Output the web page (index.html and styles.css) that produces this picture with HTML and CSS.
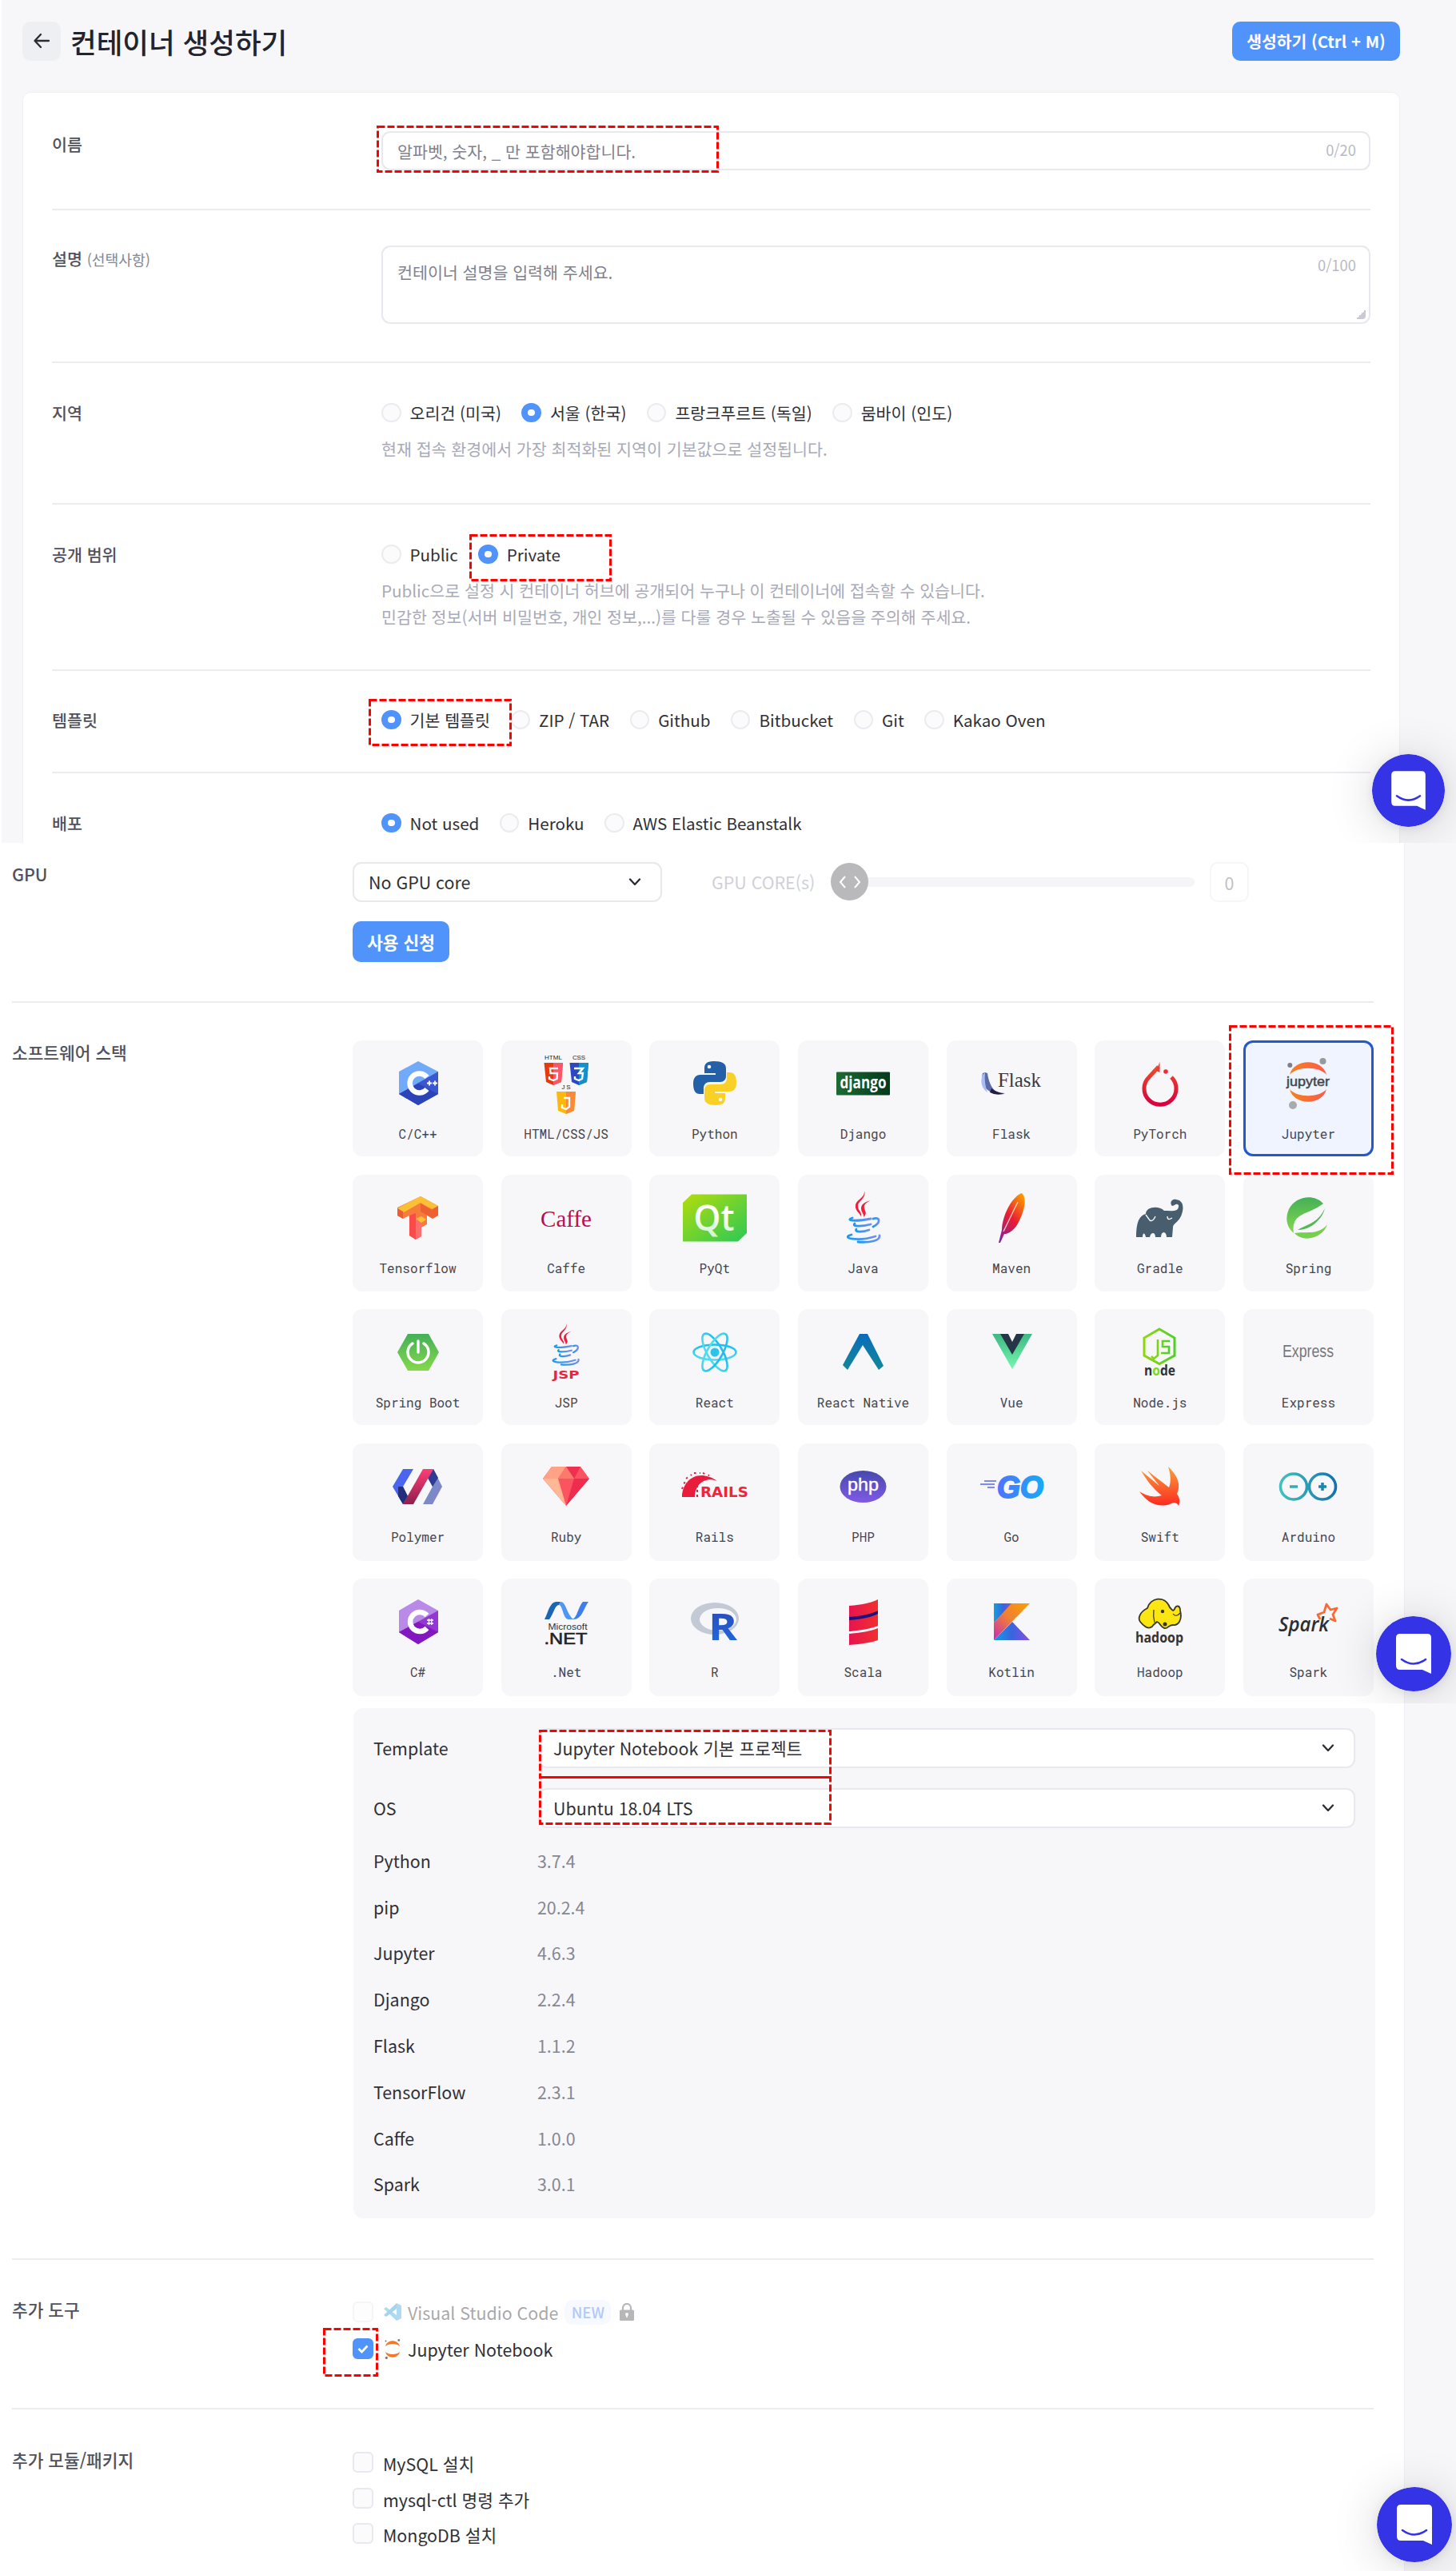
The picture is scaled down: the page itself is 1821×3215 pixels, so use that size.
FILE: index.html
```html
<!DOCTYPE html>
<html lang="ko">
<head>
<meta charset="utf-8">
<title>컨테이너 생성하기</title>
<link rel="stylesheet" href="styles.css">
</head>
<body>
<svg class="defs" width="0" height="0" aria-hidden="true">
  <defs>
    <linearGradient id="orange" x1="0" x2="1"><stop offset="0" stop-color="#f58220"/><stop offset="1" stop-color="#fb5a4c"/></linearGradient>
    <linearGradient id="dj" x1="0" x2="1"><stop offset="0" stop-color="#1d6b33"/><stop offset="1" stop-color="#04391f"/></linearGradient>
    <linearGradient id="pt" x1="0" y1="0" x2="0" y2="1"><stop offset="0" stop-color="#ee4c2c"/><stop offset="1" stop-color="#d8003f"/></linearGradient>
    <linearGradient id="qt" x1="0" y1="0" x2="1" y2="1"><stop offset="0" stop-color="#b4dc0c"/><stop offset="1" stop-color="#2ac956"/></linearGradient>
    <linearGradient id="qtt" x1="0" y1="0" x2="0" y2="1"><stop offset="0.4" stop-color="#fff"/><stop offset="1" stop-color="#c9f2c4"/></linearGradient>
    <linearGradient id="leaf" x1="0" y1="0" x2="0" y2="1"><stop offset="0" stop-color="#45b058"/><stop offset="1" stop-color="#84d84c"/></linearGradient>
    <linearGradient id="mvn" x1="0.8" y1="0" x2="0.2" y2="1"><stop offset="0" stop-color="#fb9500"/><stop offset="0.5" stop-color="#ea1c33"/><stop offset="1" stop-color="#8a2094"/></linearGradient>
    <linearGradient id="java" x1="0" x2="1"><stop offset="0" stop-color="#189bf0"/><stop offset="1" stop-color="#6f8fee"/></linearGradient>
    <linearGradient id="rct" x1="0" y1="0" x2="0" y2="1"><stop offset="0" stop-color="#1cbdf0"/><stop offset="1" stop-color="#52dcee"/></linearGradient>
    <linearGradient id="rn" x1="0" y1="0" x2="0" y2="1"><stop offset="0" stop-color="#0a6cbc"/><stop offset="1" stop-color="#128897"/></linearGradient>
    <linearGradient id="vue" x1="0" y1="0" x2="0" y2="1"><stop offset="0" stop-color="#3fb883"/><stop offset="1" stop-color="#74f7ad"/></linearGradient>
    <linearGradient id="php" x1="0" y1="0" x2="0" y2="1"><stop offset="0" stop-color="#464aac"/><stop offset="1" stop-color="#7f5ae6"/></linearGradient>
    <linearGradient id="go" x1="0" x2="1"><stop offset="0" stop-color="#4e74ff"/><stop offset="1" stop-color="#19a9f5"/></linearGradient>
    <linearGradient id="swift" x1="0" y1="0" x2="0" y2="1"><stop offset="0" stop-color="#fba03c"/><stop offset="1" stop-color="#fc2a20"/></linearGradient>
    <linearGradient id="ard" gradientUnits="userSpaceOnUse" x1="14" y1="0" x2="86" y2="0"><stop offset="0" stop-color="#43c3bd"/><stop offset="1" stop-color="#1272ad"/></linearGradient>
    <linearGradient id="node" x1="0" x2="1"><stop offset="0" stop-color="#8ed70c"/><stop offset="1" stop-color="#4ed028"/></linearGradient>
    <linearGradient id="kt" x1="0" y1="1" x2="1" y2="0"><stop offset="0" stop-color="#c729b8"/><stop offset="0.5" stop-color="#f07f35"/><stop offset="1" stop-color="#f9a000"/></linearGradient>
    <linearGradient id="ktb" x1="0" x2="1"><stop offset="0" stop-color="#12a0df"/><stop offset="0.5" stop-color="#3a63e0"/><stop offset="1" stop-color="#8a50e2"/></linearGradient>
    <linearGradient id="rl" x1="0" y1="0" x2="0" y2="1"><stop offset="0" stop-color="#2c45b2"/><stop offset="1" stop-color="#1f6ee4"/></linearGradient>
    <linearGradient id="scala" x1="0" x2="1"><stop offset="0" stop-color="#e6144f"/><stop offset="1" stop-color="#f12f2f"/></linearGradient>
    <linearGradient id="pink" x1="0" y1="0" x2="0" y2="1"><stop offset="0" stop-color="#ff3d78"/><stop offset="1" stop-color="#8e1f4c"/></linearGradient>
    <symbol id="chat" viewBox="0 0 94 94">
      <circle cx="47" cy="47" r="47" fill="#3434e6"/>
      <path d="M30 22H64q5 0 5 5V72L58 67H30q-5 0-5-5V27q0-5 5-5Z" fill="#fff"/>
      <path d="M32 54Q47 65 62 54" fill="none" stroke="#3434e6" stroke-width="2.6" stroke-linecap="round"/>
    </symbol>
    <symbol id="chev" viewBox="0 0 16 10"><path d="M2 1.5L8 8L14 1.5" fill="none" stroke="#2b2c33" stroke-width="2.3" stroke-linecap="round" stroke-linejoin="round"/></symbol>
    <symbol id="cup" viewBox="0 0 46 66">
      <path d="M24 0c3 9-8 13-8 19 0 6 5 7 4 13C17 27 12 24 13 18 14 11 25 9 24 0Z" fill="#ec1f3c"/>
      <path d="M32 12c-6 3-9 5-8 10 1 4 4 6-1 11 1-4-3-6-3-11 0-6 6-8 12-10Z" fill="#ec1f3c"/>
      <g fill="none" stroke="url(#java)" stroke-linecap="round" stroke-width="2.8">
        <path d="M9 34c-9 3 2 5 23 1"/><path d="M35 35c9-3 10 5 0 10"/><path d="M12 41c-4 4 8 4 20 1"/><path d="M14 48c-3 4 8 4 16 1"/><path d="M8 55c-15 4 8 9 30 2"/><path d="M16 64c14 1 28-1 27-8"/>
      </g>
    </symbol>
    <symbol id="jup" viewBox="0 0 20 25">
      <path d="M1 9C3 0 17 0 19 9 15 5 5 5 1 9Z" fill="#f37726"/><path d="M1 16c2 9 16 9 18 0-4 4-14 4-18 0Z" fill="#f37726"/>
      <circle cx="1.5" cy="2.5" r="1" fill="#77787d"/><circle cx="17.8" cy="1.4" r="1.4" fill="#77787d"/><circle cx="2.3" cy="23.4" r="1.6" fill="#77787d"/>
    </symbol>
  </defs>
</svg>

<section class="part part-basic">
  <header class="top">
    <button class="back" aria-label="뒤로"><svg width="22" height="20" viewBox="0 0 22 20"><path d="M10 2L2.500 10L10 18M3 10H20" fill="none" stroke="#2b2c33" stroke-width="2.300" stroke-linecap="round" stroke-linejoin="round"/></svg></button>
    <h1>컨테이너 생성하기</h1>
    <button class="btn create">생성하기 (Ctrl + M)</button>
  </header>
  <div class="card">
    <div class="row r-name"><div class="label">이름</div><div class="field"><span>알파벳, 숫자, _ 만 포함해야합니다.</span><span class="count">0/20</span></div></div>
    <div class="row r-desc"><div class="label">설명 <small>(선택사항)</small></div><div class="field area"><span>컨테이너 설명을 입력해 주세요.</span><span class="count">0/100</span><i class="grip"></i></div></div>
    <div class="row r-region"><div class="label">지역</div><div>
      <div class="radios"><span class="radio">오리건 (미국)</span><span class="radio on">서울 (한국)</span><span class="radio">프랑크푸르트 (독일)</span><span class="radio">뭄바이 (인도)</span></div>
      <p class="help">현재 접속 환경에서 가장 최적화된 지역이 기본값으로 설정됩니다.</p></div></div>
    <div class="row r-scope"><div class="label">공개 범위</div><div>
      <div class="radios"><span class="radio">Public</span><span class="radio on">Private</span></div>
      <p class="help">Public으로 설정 시 컨테이너 허브에 공개되어 누구나 이 컨테이너에 접속할 수 있습니다.<br>민감한 정보(서버 비밀번호, 개인 정보,...)를 다룰 경우 노출될 수 있음을 주의해 주세요.</p></div></div>
    <div class="row r-tpl"><div class="label">템플릿</div><div class="radios"><span class="radio on">기본 템플릿</span><span class="radio">ZIP / TAR</span><span class="radio">Github</span><span class="radio">Bitbucket</span><span class="radio">Git</span><span class="radio">Kakao Oven</span></div></div>
    <div class="row r-deploy"><div class="label">배포</div><div class="radios"><span class="radio on">Not used</span><span class="radio">Heroku</span><span class="radio">AWS Elastic Beanstalk</span></div></div>
  </div>
  <svg class="marks" width="1821" height="1054"><rect x="472.500" y="158.500" width="425" height="56"/><rect x="588.500" y="669.500" width="175" height="56"/><rect x="462.500" y="875.500" width="176" height="56"/></svg>
  <svg class="chat chat-1"><use href="#chat"/></svg>
</section>

<section class="part part-stack">
  <div class="sheet">
    <div class="row r-gpu"><div class="label">GPU</div><div>
      <div class="gpu">
        <div class="select">No GPU core<svg width="16" height="10"><use href="#chev"/></svg></div>
        <span class="cores">GPU CORE(s)</span>
        <div class="slider"><span class="knob"><svg width="28" height="18" viewBox="0 0 28 18"><path d="M8 2L2 9L8 16M20 2L26 9L20 16" fill="none" stroke="#fff" stroke-width="2"/></svg></span></div>
        <span class="num">0</span>
      </div>
      <button class="btn apply">사용 신청</button></div></div>
    <div class="row r-soft"><div class="label">소프트웨어 스택</div>
      <div class="tiles">
        <div class="tile"><svg viewBox="0 0 100 90"><path d="M50 17L75 30V58L50 72L26 58V30Z" fill="#72aafa"/><path d="M26 58L75 30V58L50 72Z" fill="#3a57d0"/><path d="M26 58L50 45L75 58L50 72Z" fill="#2c44b8"/><path d="M61 37A12 12 0 1 0 61 52" fill="none" stroke="#fff" stroke-width="6.500"/><path d="M61 44.500h6M64 41.500v6M68 44.500h6M71 41.500v6" stroke="#fff" stroke-width="1.800"/></svg><span>C/C++</span></div>
        <div class="tile"><svg viewBox="0 0 100 90"><g class="lg" font-size="8" fill="#222" text-anchor="middle"><text x="34" y="15" textLength="22">HTML</text><text x="66" y="15" textLength="16">CSS</text><text x="50" y="52" textLength="11">JS</text></g><path d="M22.500 19H46L44 43L34 47L25 43Z" fill="#e8380e"/><path d="M34 19H46L44 43L34 47Z" fill="#fb5568"/><path d="M54.500 19H78L76 43L66 47L57 43Z" fill="#2b49c2"/><path d="M66 19H78L76 43L66 47Z" fill="#148fcd"/><path d="M38 55H62L60 79L50 83L40 79Z" fill="#fbb90e"/><path d="M50 55H62L60 79L50 83Z" fill="#fb8a35"/><g fill="none" stroke="#fff" stroke-width="2.400"><path d="M40 26H30L30.500 32H39L38.500 39L34 41L29 39V36"/><path d="M60 26H71L66 32H71L70 39L66 41L61 39V36"/><path d="M47 63H54V74L50 77L45 75V71"/></g></svg><span>HTML/CSS/JS</span></div>
        <div class="tile"><svg viewBox="0 0 100 90"><path d="M49 17c-10 0-12 4-12 9v6h14v2H32c-6 0-9 4-9 11 0 9 3 13 8 13h5v-7c0-5 3-8 8-8h13c4 0 7-3 7-7V26c0-6-5-9-15-9Z" fill="#2360a8"/><path d="M51 72c10 0 12-4 12-9v-6H50v-2h18c6 0 9-4 9-11 0-9-3-13-8-13h-4v7c0 5-3 8-8 8H44c-4 0-7 3-7 7v10c0 6 5 9 14 9Z" fill="#f9d126"/><circle cx="43" cy="24" r="2.300" fill="#f7f7fa"/><circle cx="57" cy="65" r="2.300" fill="#f7f7fa"/></svg><span>Python</span></div>
        <div class="tile"><svg viewBox="0 0 100 90"><rect x="17" y="30.500" width="67" height="29" rx="1" fill="url(#dj)"/><text class="os b" x="50.500" y="51" font-size="21" fill="#fff" text-anchor="middle" textLength="58" lengthAdjust="spacingAndGlyphs">django</text></svg><span>Django</span></div>
        <div class="tile"><svg viewBox="0 0 100 90"><path d="M14 32C10 46 20 60 41 58 30 59 22 48 20 32L17 31Z" fill="#5b6aa8"/><path d="M14 34C10 44 14 52 20 56 17 48 16 40 17 31Z" fill="#a9bdf2"/><path d="M23 56Q32 61 42 57 33 57 25 51Z" fill="#231c44"/><text class="sf" x="33" y="49" font-size="26" fill="#3a3a3e" textLength="54" lengthAdjust="spacingAndGlyphs">Flask</text></svg><span>Flask</span></div>
        <div class="tile"><svg viewBox="0 0 100 90"><path d="M48 24L36 37A20 20 0 1 0 64 37" fill="none" stroke="url(#pt)" stroke-width="5"/><path d="M49.500 18V31L45 29Z" fill="#ee3c2f"/><circle cx="57" cy="30" r="2.800" fill="#ea2f37"/></svg><span>PyTorch</span></div>
        <div class="tile selected"><svg viewBox="0 0 100 90"><path d="M27 34C32 13 68 13 73 34 64 23 36 23 27 34Z" fill="url(#orange)"/><path d="M27 52c5 21 41 21 46 0-9 11-37 11-46 0Z" fill="url(#orange)"/><circle cx="27.300" cy="22" r="3" fill="#7f8084"/><circle cx="68.500" cy="17" r="4" fill="#98999c"/><circle cx="31" cy="72" r="5" fill="#a9aaad"/><text class="lg" x="50" y="48" font-size="17" fill="#46474b" stroke="#46474b" stroke-width=".5" text-anchor="middle" textLength="54" lengthAdjust="spacingAndGlyphs">jupyter</text></svg><span>Jupyter</span></div>

        <div class="tile"><svg viewBox="0 0 100 90"><path d="M24 32L53 18L75 30V41L61 35V53L54 57V68L47 72L39 67V42L31 46L24 42Z" fill="#f57c3c"/><path d="M24 33L53 18L75 30L67 34L53 26L32 38Z" fill="#fcc035"/><path d="M24 33L31 37V46L24 42Z" fill="#ee5a34"/><path d="M53 27L67 35L75 30V42L68 46L53 37Z" fill="#ee6030"/><path d="M39 42L47 39V72L39 67Z" fill="#fb4a48"/><path d="M47 48H54V68L47 72Z" fill="#fc6e6c"/><path d="M47 46L54 43L60 47L54 51Z" fill="#fcc035"/></svg><span>Tensorflow</span></div>
        <div class="tile"><svg viewBox="0 0 100 90"><text class="sf" x="50" y="56" font-size="29" fill="#b5104f" text-anchor="middle" textLength="64" lengthAdjust="spacingAndGlyphs">Caffe</text></svg><span>Caffe</span></div>
        <div class="tile"><svg viewBox="0 0 100 90"><path d="M21 15.500H90V64L79 74.500H10V26Z" fill="url(#qt)"/><text x="49" y="61" class="os sb" font-size="46" fill="url(#qtt)" text-anchor="middle" textLength="51" lengthAdjust="spacingAndGlyphs">Qt</text></svg><span>PyQt</span></div>
        <div class="tile"><svg viewBox="0 0 100 90"><use href="#cup" x="28" y="11" width="46" height="66"/></svg><span>Java</span></div>
        <div class="tile"><svg viewBox="0 0 100 90"><path d="M34 76L38 60C38 44 50 18 63 14 70 20 66 38 58 52 53 61 46 65 41 65L36 76Z" fill="url(#mvn)"/><path d="M40 62L58 25" stroke="#ffd0c4" stroke-width="1.300"/></svg><span>Maven</span></div>
        <div class="tile"><svg viewBox="0 0 100 90"><path d="M20 69C20 50 24 42 32 40 32 31 48 29 55 36 64 36 74 38 73 29 70 26 69 29 65 30 61 26 65 21 70 22 80 23 80 34 76 43 72 51 66 52 66 57L65 69H58C58 61 51 61 51 69H44C44 62 38 63 37 69H32C31 63 28 63 28 69Z" fill="#485e6e"/><path d="M32 41L37 48Q41 50 44 43M59 43Q59 49 65 45" fill="none" stroke="#f7f7fa" stroke-width="1.400"/></svg><span>Gradle</span></div>
        <div class="tile"><svg viewBox="0 0 100 90"><path d="M69 27C57 14 34 18 26 34 20 48 25 58 32 64 28 38 50 42 69 27Z" fill="url(#leaf)"/><path d="M71 33C68 46 54 60 37 60 50 52 62 52 71 33Z" fill="#52b857"/><path d="M33 64C44 61 63 68 74 53 70 68 46 78 33 64Z" fill="#74d04e"/></svg><span>Spring</span></div>

        <div class="tile"><svg viewBox="0 0 100 90"><path d="M37 22H63L76 45L63 68H37L24 45Z" fill="url(#leaf)"/><path d="M43 34A13 13 0 1 0 57 34" fill="none" stroke="#fff" stroke-width="3.400" stroke-linecap="round"/><path d="M50 31V45" stroke="#fff" stroke-width="3.400" stroke-linecap="round"/></svg><span>Spring Boot</span></div>
        <div class="tile"><svg viewBox="0 0 100 90"><use href="#cup" x="31" y="9" width="37" height="53"/><text class="dj b" x="50" y="78" font-size="14" fill="#e8253f" text-anchor="middle" textLength="33" lengthAdjust="spacingAndGlyphs">JSP</text></svg><span>JSP</span></div>
        <div class="tile"><svg viewBox="0 0 100 90"><g fill="none" stroke="url(#rct)" stroke-width="2.600"><ellipse cx="50" cy="45" rx="26.500" ry="9.500"/><ellipse cx="50" cy="45" rx="26.500" ry="9.500" transform="rotate(60 50 45)"/><ellipse cx="50" cy="45" rx="26.500" ry="9.500" transform="rotate(120 50 45)"/></g><circle cx="50" cy="45" r="5.500" fill="#2ac3ea"/></svg><span>React</span></div>
        <div class="tile"><svg viewBox="0 0 100 90"><path d="M46 22H56L76 62L70 67L50 36L31 67L25 61Z" fill="url(#rn)"/></svg><span>React Native</span></div>
        <div class="tile"><svg viewBox="0 0 100 90"><path d="M26 22H76L51 66Z" fill="url(#vue)"/><path d="M36 22H66L51 48Z" fill="#253746"/><path d="M46 22H56L51 32Z" fill="#f7f7fa"/></svg><span>Vue</span></div>
        <div class="tile"><svg viewBox="0 0 100 90"><path d="M49 16L68 27V49L49 59.500L30 49V27Z" fill="none" stroke="url(#node)" stroke-width="3"/><path d="M47 29V49L42 53L39 50M62 31H53V38H61V46H51" fill="none" stroke="url(#node)" stroke-width="2.600"/><text class="os b" x="49.500" y="74" font-size="18" fill="#303238" text-anchor="middle" textLength="39" lengthAdjust="spacingAndGlyphs">n<tspan fill="#80d816">o</tspan>de</text></svg><span>Node.js</span></div>
        <div class="tile"><svg viewBox="0 0 100 90"><text class="lg" x="50" y="51" font-size="22" fill="#77787b" text-anchor="middle" textLength="64" lengthAdjust="spacingAndGlyphs">Express</text></svg><span>Express</span></div>

        <div class="tile"><svg viewBox="0 0 100 90"><path d="M31 23H44L31 45L37 57L31 67L18 45Z" fill="#4a66ee"/><path d="M25 45H31L37 57L31 67L25 57Z" fill="#232f7a"/><path d="M69 23L80 45L68 67H56L68 45L62 34Z" fill="#7d88c8"/><path d="M69 23L75 34L68 45L62 34Z" fill="#2f3c96"/><path d="M56 23H69L44 67H31Z" fill="url(#pink)"/></svg><span>Polymer</span></div>
        <div class="tile"><svg viewBox="0 0 100 90"><path d="M32 20H68L79 35L50 69L21 35Z" fill="#fc5360"/><path d="M32 20H50L40 35H21Z" fill="#ffa285"/><path d="M21 35H40L50 69Z" fill="#ffb794"/><path d="M50 20H68L60 35Z" fill="#ef2e50"/><path d="M60 35L50 20L40 35Z" fill="#fb7a6c"/><path d="M60 35H79L50 69Z" fill="#ee2c4e"/></svg><span>Ruby</span></div>
        <div class="tile"><svg viewBox="0 0 100 90"><path d="M9 58C9 38 28 21 53 38 38 32 25 42 25 58Z" fill="#e91c3b"/><path d="M9 48L13 38M14 35L21 30M24 28L32 28M35 28L43 31" stroke="#e91c3b" stroke-width="2" stroke-dasharray="2.500 4.500"/><path d="M28 43V58" stroke="#e91c3b" stroke-width="2" stroke-dasharray="3 3"/><text class="dj b" x="32" y="58" font-size="17.500" fill="#f0243a" textLength="60" lengthAdjust="spacingAndGlyphs">RAILS</text></svg><span>Rails</span></div>
        <div class="tile"><svg viewBox="0 0 100 90"><ellipse cx="50.500" cy="45" rx="29" ry="20" fill="url(#php)"/><text class="lg" x="50.500" y="50" font-size="22" fill="#fff" stroke="#fff" stroke-width=".4" text-anchor="middle" textLength="39" lengthAdjust="spacingAndGlyphs">php</text></svg><span>PHP</span></div>
        <div class="tile"><svg viewBox="0 0 100 90"><path d="M16 38H31M11 42H29M20 46H29" stroke="#7b8cf8" stroke-width="1.900"/><text class="lg b" x="32" y="59" font-size="38" font-style="italic" fill="url(#go)" stroke="url(#go)" stroke-width="2" textLength="58" lengthAdjust="spacingAndGlyphs">GO</text></svg><span>Go</span></div>
        <div class="tile"><svg viewBox="0 0 100 90"><path d="M60 20C75 34 75 46 71 54 75 60 75 64 73 69 70 63 66 65 62 67 46 72 33 64 24 51 37 59 45 58 52 56 40 47 32 35 26 25L49 44C43 36 37 29 34 25L61 46C64 39 63 29 60 20Z" fill="url(#swift)"/></svg><span>Swift</span></div>
        <div class="tile"><svg viewBox="0 0 100 90"><g fill="none" stroke="url(#ard)" stroke-width="3.600"><ellipse cx="32" cy="45" rx="16.500" ry="16"/><ellipse cx="68" cy="45" rx="16.500" ry="16"/></g><path d="M27 45h10" stroke="#34adb3" stroke-width="3.500"/><path d="M63 45h10M68 40v10" stroke="#1b86b0" stroke-width="3.500"/></svg><span>Arduino</span></div>

        <div class="tile"><svg viewBox="0 0 100 90"><path d="M50 17L75 31V58L50 73L26 58V31Z" fill="#b98ae8"/><path d="M26 58L75 31V58L50 73Z" fill="#9238d0"/><path d="M26 58L50 45L75 58L50 73Z" fill="#8418c0"/><path d="M61 37A12 12 0 1 0 61 53" fill="none" stroke="#fff" stroke-width="6.500"/><path d="M61 43h8M61 47h8M63.500 41v8M66.700 41v8" stroke="#fff" stroke-width="1.300"/></svg><span>C#</span></div>
        <div class="tile"><svg viewBox="0 0 100 90"><path d="M23 42C27 36 29 20 38 20H43L41 24C36 24 35 34 29 42Z" fill="#1c64b4"/><path d="M43 20C50 20 50 34 59 42H53C46 42 46 24 41 24Z" fill="#4d98f4"/><path d="M56 42C64 42 64 28 71 20H78C72 28 70 42 59 42Z" fill="#3d7fee"/><text class="lg" x="52" y="54.500" font-size="11" fill="#333" text-anchor="middle" textLength="49" lengthAdjust="spacingAndGlyphs">Microsoft</text><text class="lg" x="49.500" y="72.500" font-size="21" fill="#222" stroke="#222" stroke-width=".6" text-anchor="middle" textLength="54" lengthAdjust="spacingAndGlyphs">.NET</text></svg><span>.Net</span></div>
        <div class="tile"><svg viewBox="0 0 100 90"><path fill-rule="evenodd" d="M20 41a30 20 0 1 0 60 0a30 20 0 1 0-60 0ZM31 42a23 14 0 1 1 46 0a23 14 0 1 1-46 0Z" fill="#c3cad6"/><text class="os b" x="42" y="68" font-size="47" fill="url(#rl)" textLength="36" lengthAdjust="spacingAndGlyphs">R</text></svg><span>R</span></div>
        <div class="tile"><svg viewBox="0 0 100 90"><path d="M33 38L69 31V50L33 57Z" fill="#1c1080"/><g fill="url(#scala)"><path d="M33 25Q58 23 69 17V31Q58 37 33 39Z"/><path d="M33 43Q58 41 69 35V50Q58 55 33 57Z"/><path d="M33 60Q58 58 69 53V68Q58 72 33 74Z"/></g></svg><span>Scala</span></div>
        <div class="tile"><svg viewBox="0 0 100 90"><path d="M28 22H52L28 46Z" fill="url(#ktb)"/><path d="M28 68L51 45L73 68Z" fill="url(#ktb)"/><path d="M50 22H73L28 68V46Z" fill="url(#kt)"/></svg><span>Kotlin</span></div>
        <div class="tile"><svg viewBox="0 0 100 90"><path d="M34 28C37 15 56 11 62 27 65 30 66 33 68 29 70 24 75 24 75 31 78 42 73 50 66 49 60 49 60 54 55 53 50 51 50 46 46 45 42 49 43 47 40 51 36 54 32 53 25 45 22 41 24 33 34 28Z" fill="#fbe614" stroke="#35352b" stroke-width="1.800"/><path d="M42 30Q41 38 43 46M66 35Q70 40 75 34" fill="none" stroke="#35352b" stroke-width="1.200"/><circle cx="53" cy="32" r="2.200" fill="#35352b"/><circle cx="56" cy="48" r="2.500" fill="#35352b"/><text class="os b" x="49" y="71" font-size="18" fill="#333438" text-anchor="middle" textLength="60" lengthAdjust="spacingAndGlyphs">hadoop</text></svg><span>Hadoop</span></div>
        <div class="tile"><svg viewBox="0 0 100 90"><text class="os sb" x="13" y="57" font-size="26" font-style="italic" fill="#2d2e32" textLength="63" lengthAdjust="spacingAndGlyphs">Spark</text><path d="M65 42L62 36L70 33L73 23L78 30L86 28L81 36L84 44L77 41" fill="none" stroke="#fb6a34" stroke-width="2.800" stroke-linejoin="round"/></svg><span>Spark</span></div>
      </div>
    </div>
  </div>
  <svg class="marks" width="1821" height="1076"><rect x="1539.500" y="229.500" width="203" height="184"/></svg>
  <svg class="chat chat-2"><use href="#chat"/></svg>
</section>

<section class="part part-extra">
  <div class="sheet">
    <div class="row r-env"><div></div>
      <div class="panel">
        <dl>
          <dt>Template</dt><dd class="select">Jupyter Notebook 기본 프로젝트<svg width="16" height="10"><use href="#chev"/></svg></dd>
          <dt>OS</dt><dd class="select">Ubuntu 18.04 LTS<svg width="16" height="10"><use href="#chev"/></svg></dd>
        </dl>
        <dl class="versions">
          <dt>Python</dt><dd>3.7.4</dd><dt>pip</dt><dd>20.2.4</dd><dt>Jupyter</dt><dd>4.6.3</dd><dt>Django</dt><dd>2.2.4</dd><dt>Flask</dt><dd>1.1.2</dd><dt>TensorFlow</dt><dd>2.3.1</dd><dt>Caffe</dt><dd>1.0.0</dd><dt>Spark</dt><dd>3.0.1</dd>
        </dl>
      </div></div>
    <div class="row r-tools"><div class="label">추가 도구</div><div class="checks">
      <div class="check off"><i></i><svg width="24" height="24" viewBox="0 0 24 24"><path d="M17 1L23 4V20L17 23L1 8L4 6L17 16Z" fill="#45a9e0"/><path d="M17 1V8L4 18L1 16Z" fill="#2b9ad8"/></svg><span>Visual Studio Code</span><b>NEW</b><svg class="lock" width="18" height="22" viewBox="0 0 18 22"><path d="M4 9V6a5 5 0 0 1 10 0V9" fill="none" stroke="#55565a" stroke-width="2.200"/><rect y="8.500" width="18" height="13.500" rx="1.500" fill="#55565a"/><circle cx="9" cy="14" r="2" fill="#fff"/><path d="M9 14v4" stroke="#fff" stroke-width="1.600"/></svg></div>
      <div class="check on"><i><svg width="14" height="11" viewBox="0 0 14 11"><path d="M1.500 5L5.500 9L12.500 1.500" fill="none" stroke="#fff" stroke-width="2.800"/></svg></i><svg width="24" height="25"><use href="#jup" x="2" width="20" height="25"/></svg><span>Jupyter Notebook</span></div></div></div>
    <div class="row r-mods"><div class="label">추가 모듈/패키지</div><div class="checks">
      <div class="check"><i></i><span>MySQL 설치</span></div><div class="check"><i></i><span>mysql-ctl 명령 추가</span></div><div class="check"><i></i><span>MongoDB 설치</span></div></div></div>
  </div>
  <svg class="marks" width="1821" height="1085"><rect x="676.500" y="34.500" width="363" height="58"/><rect x="676.500" y="92.500" width="363" height="58"/><path class="solid" d="M676 92.500H1040"/><rect x="406.500" y="782.500" width="66" height="58"/></svg>
  <svg class="chat chat-3"><use href="#chat"/></svg>
</section>
</body>
</html>
```
FILE: styles.css
```css
*, *::before { box-sizing: border-box; }
body {
  margin: 0;
  width: 1821px;
  background: #fff;
  color: #2f3037;
  font: 400 20.6px/30px "Noto Sans CJK KR", "Noto Sans", sans-serif;
}
h1, p, dl, dd { margin: 0; }
button { border: 0; padding: 0; font: inherit; }
.defs { display: block; height: 0; }

/* stitched parts of the form */
.part { position: relative; overflow: hidden; background: #f7f7fa; }
.part-basic { height: 1054px; border-left: 2px solid #fff; padding: 0 70px 0 26px; }
.part-stack { height: 1076px; }
.part-extra { height: 1085px; }
.sheet { height: 100%; width: 1757px; background: #fff; border-right: 1px solid #efeff3; padding: 0 38px 0 15px; font-size: 21.4px; }

.top { display: flex; align-items: center; height: 115px; padding-bottom: 13px; }
.back { width: 48px; height: 49px; border-radius: 10px; background: #eeeff3; display: flex; align-items: center; justify-content: center; }
.top h1 { margin-left: 12px; font-size: 35.5px; line-height: 50px; font-weight: 500; color: #23242c; padding-top: 1px; }
.btn { border-radius: 10px; background: #4f93fb; color: #fff; font-weight: 700; }
.create { margin-left: auto; width: 210px; height: 49px; font-size: 20.4px; }
.card { height: 939px; background: #fff; border: 1px solid #f0f0f4; border-bottom: 0; border-radius: 10px 10px 0 0; padding: 0 36px; }

.row { display: grid; grid-template-columns: 412px 1fr; align-items: start; border-bottom: 2px solid #ebebf1; }
.label { font-weight: 500; color: #50515d; line-height: 30px; }
.label small { font-size: 18.2px; font-weight: 400; color: #858694; }
.r-name { height: 147px; padding-top: 48px; }
.r-desc { height: 191px; padding-top: 44px; }
.r-name .label, .r-desc .label { padding-top: 1px; }
.r-region { height: 177px; padding-top: 47px; }
.r-scope { height: 208px; padding-top: 47px; }
.r-tpl { height: 128px; padding-top: 46px; }
.r-deploy { height: 96px; padding-top: 47px; border: 0; }

.field { display: flex; justify-content: space-between; height: 49px; border: 2px solid #e8e8ee; border-radius: 11px; padding: 8px 16px 0 18px; color: #80818f; background: #fff; }
.field .count { color: #b9bac4; font-size: 18.4px; line-height: 27px; }
.area { position: relative; height: 98px; padding-top: 16px; }
.area .count { line-height: 12px; }
.grip { position: absolute; right: 4px; bottom: 4px; width: 12px; height: 12px; background: linear-gradient(135deg, transparent 50%, #c9cad4 50%); border-bottom-right-radius: 4px; }

.radios { display: flex; gap: 25.5px; }
.radio { display: flex; align-items: center; gap: 11px; height: 30px; white-space: nowrap; }
.radio::before { content: ""; width: 24.5px; height: 24.5px; border-radius: 50%; background: #fbfbfc; border: 2px solid #ebebf0; }
.radio.on::before { background: #fff; border: 8px solid #4f93fb; }
.help { color: #a9aab8; line-height: 33px; padding-top: 14px; }

/* gpu */
.sheet .row { grid-template-columns: 426px 1fr; }
.r-gpu { height: 200px; padding-top: 24px; }
.gpu { display: flex; align-items: center; height: 49px; margin-bottom: 25px; }
.select { display: flex; align-items: center; justify-content: space-between; height: 50px; border: 2px solid #e8e8ee; border-radius: 11px; background: #fff; padding: 0 24px 0 18px; }
.gpu .select { width: 387px; }
.cores { margin-left: 62px; width: 149px; color: #cfd0d9; }
.slider { width: 455px; height: 12px; border-radius: 6px; background: #f5f5f8; display: flex; align-items: center; }
.knob { flex: none; width: 47px; height: 47px; border-radius: 50%; background: #b9b9bb; display: flex; align-items: center; justify-content: center; }
.num { margin-left: 19px; width: 49px; height: 50px; line-height: 47px; border: 2px solid #f6f6f8; border-radius: 10px; text-align: center; color: #c0c1c5; }
.apply { width: 121px; height: 51px; }

/* software stack */
.r-soft { height: 876px; padding-top: 47px; border: 0; }
.tiles { display: grid; grid-template-columns: repeat(7, 163px); justify-content: space-between; width: 1277px; grid-template-rows: 145px 146px 145px 147px 147px; row-gap: 22.6px; }
.tile { display: flex; flex-direction: column; align-items: center; padding-top: 9px; border-radius: 12px; background: #f7f7fa; }
.tile svg { width: 100px; height: 90px; flex: none; }
.tile span { margin-top: 7px; font: 16px/22px "Roboto Mono", "Liberation Mono", monospace; color: #45464f; }
.tile.selected { background: #eff4fe; box-shadow: inset 0 0 0 3px #2459cd; }
.lg { font-family: "Liberation Sans", sans-serif; }
.sf { font-family: "Liberation Serif", serif; }
.os { font-family: "Open Sans", sans-serif; }
.dj { font-family: "DejaVu Sans", sans-serif; }
.b { font-weight: 700; }
.sb { font-weight: 600; }

/* environment */
.sheet .r-env { height: 696px; padding-top: 6px; grid-template-columns: 427px 1fr; }
.panel { width: 1278px; height: 638px; border-radius: 12px; background: #f7f7fa; padding: 25px 25px 25px 25px; }
.panel dl { display: grid; grid-template-columns: 205px 1fr; row-gap: 25px; align-items: center; }
.panel .select { margin-left: 1px; padding-left: 17px; }
.panel .versions { grid-auto-rows: 57.8px; row-gap: 0; margin-top: 12px; }
.versions dd { color: #868791; }

/* tools and modules */
.r-tools { height: 187px; padding-top: 42px; }
.r-tools .label { padding-top: 5px; }
.r-mods { height: 200px; padding-top: 44px; border: 0; }
.r-mods .label { padding-top: 4px; }
.check { display: flex; align-items: center; height: 46px; }
.r-mods .check { height: 44.5px; }
.check i { width: 26px; height: 26px; border: 2px solid #e8e8ee; border-radius: 6px; background: #fbfbfc; display: flex; align-items: center; justify-content: center; }
.check.on i { background: #4f93fb; border-color: #4f93fb; }
.check > span { padding-top: 1px; margin-left: 7px; }
.check > svg { margin-left: 12px; }
.r-mods .check > span { margin-left: 12px; padding-top: 4px; }
.check.off { opacity: .42; }
.check b { margin-left: 8px; width: 58px; height: 31px; border-radius: 10px; background: #eaf2ff; color: #4083f5; font-size: 18.5px; line-height: 31px; font-weight: 500; text-align: center; }
.check .lock { margin-left: 11px; }

/* overlays */
.marks { position: absolute; left: 0; top: 0; pointer-events: none; }
.part-basic .marks { left: -2px; }
.part-stack .marks, .part-extra .marks { left: -1px; }
.marks rect { fill: none; stroke: #f00; stroke-width: 3; stroke-dasharray: 9 3; }
.marks .solid { stroke: #f00; stroke-width: 3; }
.chat { position: absolute; width: 94px; height: 94px; border-radius: 50%; box-shadow: 0 2px 12px rgba(0,0,0,.08), 0 4px 60px rgba(0,0,0,.16); }
.chat-1 { left: 1714px; top: 943px; width: 91px; height: 91px; }
.chat-2 { left: 1721px; top: 967px; }
.chat-3 { left: 1722px; top: 980px; }
```
